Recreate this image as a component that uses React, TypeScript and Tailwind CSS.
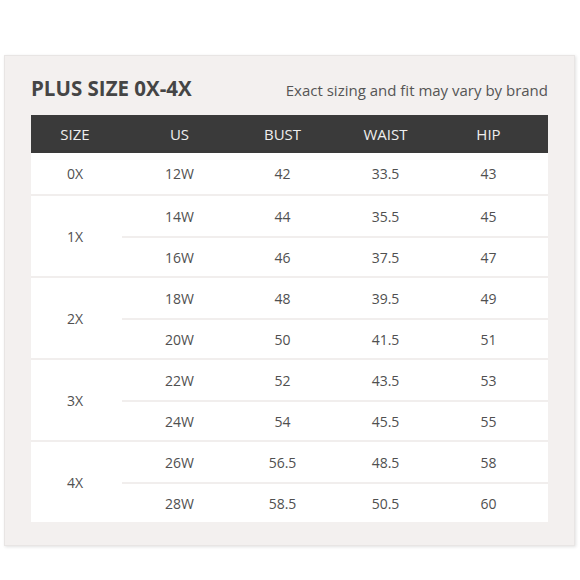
import React from "react";

type Row = { us: string; bust: string; waist: string; hip: string };
type Group = { size: string; rows: Row[] };

const groups: Group[] = [
  { size: "0X", rows: [{ us: "12W", bust: "42", waist: "33.5", hip: "43" }] },
  {
    size: "1X",
    rows: [
      { us: "14W", bust: "44", waist: "35.5", hip: "45" },
      { us: "16W", bust: "46", waist: "37.5", hip: "47" },
    ],
  },
  {
    size: "2X",
    rows: [
      { us: "18W", bust: "48", waist: "39.5", hip: "49" },
      { us: "20W", bust: "50", waist: "41.5", hip: "51" },
    ],
  },
  {
    size: "3X",
    rows: [
      { us: "22W", bust: "52", waist: "43.5", hip: "53" },
      { us: "24W", bust: "54", waist: "45.5", hip: "55" },
    ],
  },
  {
    size: "4X",
    rows: [
      { us: "26W", bust: "56.5", waist: "48.5", hip: "58" },
      { us: "28W", bust: "58.5", waist: "50.5", hip: "60" },
    ],
  },
];

export default function App() {
  return (
    <div
      className="w-[580px] h-[580px] bg-white pt-[55px] pl-[4px]"
      style={{ fontFamily: '"Open Sans", "Liberation Sans", sans-serif' }}
    >
      <div className="w-[571px] h-[491px] bg-[#f3f0ef] border border-[#e8e5e4] shadow-[1px_1px_3px_rgba(0,0,0,0.12)] pt-[20px] px-[26px]">
        <div className="flex items-baseline justify-between mb-[13px]">
          <div className="text-[20.5px] leading-[24px] font-bold text-[#454545]">
            PLUS SIZE 0X-4X
          </div>
          <div className="text-[15px] leading-[24px] text-[#555555]">
            Exact sizing and fit may vary by brand
          </div>
        </div>
        <div className="bg-white">
          <div className="flex h-[38px] bg-[#3a3a3a] text-[#eeeeee] text-[15px] items-center">
            <div className="w-[91px] pr-[3px] text-center">SIZE</div>
            <div className="flex-1 grid grid-cols-4 pl-[6px] pr-[8px] text-center">
              <div>US</div>
              <div>BUST</div>
              <div>WAIST</div>
              <div>HIP</div>
            </div>
          </div>
          {groups.map((g, gi) => (
            <div
              key={g.size}
              className={
                gi === 0
                  ? "flex text-[14px] text-[#505050]"
                  : "flex text-[14px] text-[#505050] border-t-2 border-[#f1eeed]"
              }
            >
              <div className="w-[91px] pr-[3px] flex items-center justify-center">
                {g.size}
              </div>
              <div className="flex-1 flex flex-col">
                {g.rows.map((r, ri) => (
                  <div
                    key={r.us}
                    className={
                      gi === 0
                        ? "grid grid-cols-4 pl-[6px] pr-[8px] h-[41px] items-center text-center"
                        : ri === 0
                        ? "grid grid-cols-4 pl-[6px] pr-[8px] h-[40px] items-center text-center"
                        : "grid grid-cols-4 pl-[6px] pr-[8px] h-[40px] items-center text-center border-t-2 border-[#f1eeed]"
                    }
                  >
                    <div>{r.us}</div>
                    <div>{r.bust}</div>
                    <div>{r.waist}</div>
                    <div>{r.hip}</div>
                  </div>
                ))}
              </div>
            </div>
          ))}
        </div>
      </div>
    </div>
  );
}
